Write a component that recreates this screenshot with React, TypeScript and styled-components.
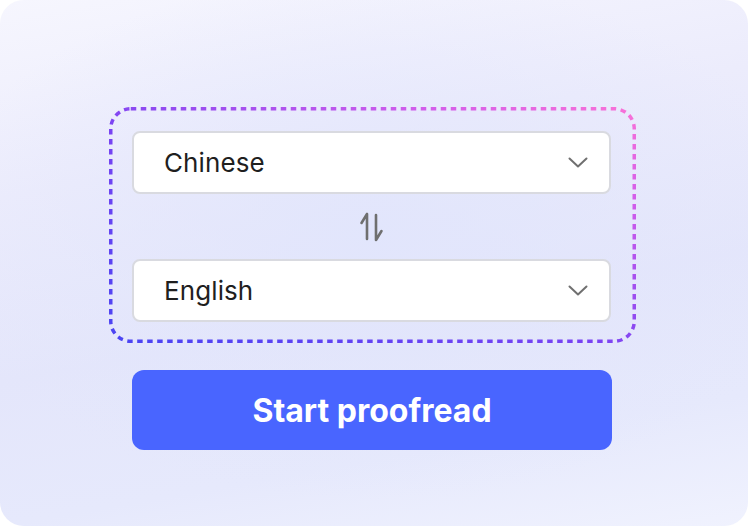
import React from "react";
import styled, { createGlobalStyle } from "styled-components";

const Global = createGlobalStyle`
  html, body { margin: 0; padding: 0; background: #ffffff; }
  body { font-family: Inter, "Noto Sans", sans-serif; }
`;

const Card = styled.div`
  width: 748px;
  height: 526px;
  border-radius: 24px;
  overflow: hidden;
  box-sizing: border-box;
  padding: 107px 4px 0 0;
  display: flex;
  flex-direction: column;
  align-items: center;
  gap: 27px;
  background:
    radial-gradient(ellipse 60% 50% at 50% 45%, rgba(225, 229, 252, 0.9), rgba(225, 229, 252, 0) 100%),
    linear-gradient(170deg, #f6f6fe 0%, #ececfc 30%, #e4e6fb 58%, #e6e9fc 80%, #f0f2fe 100%);
`;

const Group = styled.div`
  position: relative;
  width: 527px;
  height: 236px;
  box-sizing: border-box;
  padding: 24px 24px 21px 23px;
  display: flex;
  flex-direction: column;
  align-items: center;
`;

const Frame = styled.svg`
  position: absolute;
  inset: 0;
  pointer-events: none;
`;

const Select = styled.div`
  width: 479px;
  height: 63px;
  box-sizing: border-box;
  background: #ffffff;
  border: 2px solid #d9dae0;
  border-radius: 8px;
  display: flex;
  align-items: center;
  justify-content: space-between;
  padding: 0 21px 0 30px;
`;

const Label = styled.span`
  font-size: 26px;
  color: #1f1f1f;
  letter-spacing: 0.1px;
`;

const SwapRow = styled.div`
  height: 65px;
  display: flex;
  align-items: center;
  justify-content: center;
`;

const Button = styled.button`
  width: 480px;
  height: 80px;
  border: none;
  border-radius: 12px;
  background: #4965ff;
  color: #ffffff;
  font-family: Inter, "Noto Sans", sans-serif;
  font-weight: 700;
  font-size: 32px;
  cursor: pointer;
`;

const Chevron = () => (
  <svg width="20" height="12" viewBox="0 0 20 12" fill="none">
    <path d="M1.5 1.5 L10 9.5 L18.5 1.5" stroke="#707070" strokeWidth="2" strokeLinecap="round" strokeLinejoin="round" />
  </svg>
);

const SwapIcon = () => (
  <svg width="26" height="30" viewBox="0 0 26 30" fill="none">
    <path d="M8 2 V27 M8 2 L2.5 11" stroke="#6f6f6f" strokeWidth="2.6" strokeLinecap="round" strokeLinejoin="round" />
    <path d="M17 3 V28 M17 28 L22.5 19" stroke="#6f6f6f" strokeWidth="2.6" strokeLinecap="round" strokeLinejoin="round" />
  </svg>
);

export default function App() {
  return (
    <>
      <Global />
      <Card>
        <Group>
          <Frame width="527" height="236" viewBox="0 0 527 236">
            <defs>
              <linearGradient id="dash" x1="0" y1="1" x2="1" y2="0">
                <stop offset="0" stopColor="#4a44f3" />
                <stop offset="0.45" stopColor="#7843f3" />
                <stop offset="0.8" stopColor="#d25deb" />
                <stop offset="1" stopColor="#f972d7" />
              </linearGradient>
            </defs>
            <rect x="1.75" y="1.75" width="523.5" height="232.5" rx="20" ry="20" fill="none"
              stroke="url(#dash)" strokeWidth="3.5" strokeDasharray="5.5 4.5" />
          </Frame>
          <Select>
            <Label>Chinese</Label>
            <Chevron />
          </Select>
          <SwapRow>
            <SwapIcon />
          </SwapRow>
          <Select>
            <Label>English</Label>
            <Chevron />
          </Select>
        </Group>
        <Button>Start proofread</Button>
      </Card>
    </>
  );
}
